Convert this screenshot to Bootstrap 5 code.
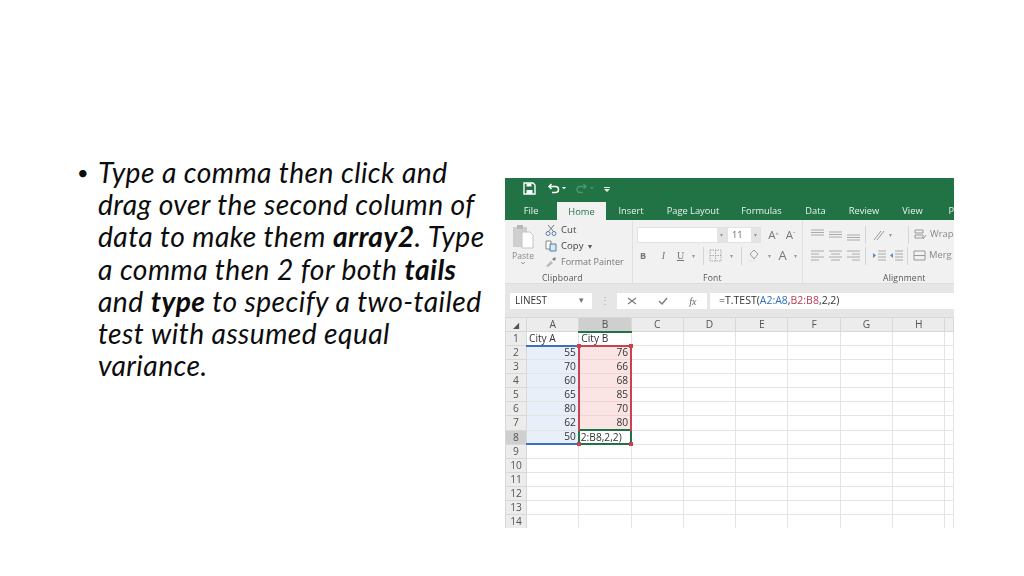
<!doctype html>
<html lang="en"><head><meta charset="utf-8"><title>T.TEST</title>
<link href="https://cdn.jsdelivr.net/npm/bootstrap@5.3.0/dist/css/bootstrap.min.css" rel="stylesheet">
<style>
html,body{height:576px;overflow:hidden;background:#fff}
.slide{width:1024px;height:576px;padding:156px 0 0 76px}
.copy{width:429px;font-family:Lato,"Liberation Sans",sans-serif;font-size:28.2px;letter-spacing:.44px;line-height:32.2px;font-style:italic;color:#0c0c0c;white-space:nowrap}
.copy b{font-weight:700}
.dot{width:22px;font-style:normal;font-size:20px;padding-left:1px}
.xl{width:449px;height:350px;margin-top:22px;overflow:hidden;flex:none;font-family:"Open Sans","Liberation Sans",sans-serif;filter:blur(.35px);background:#f1f1f1;color:#444}
.green{height:42px;background:#217346;color:#fff}
.qat{height:21px;margin-bottom:3px;padding:0 0 0 18px;gap:8px}
.qat .sv{margin-right:3px}
.tabs{height:18px;font-size:9.3px;line-height:18px;color:#e9f3ed;white-space:nowrap}
.tabs>span{text-align:center;flex:none}
.tabs .on{background:#f1f1f1;color:#217346;line-height:19px}
.ribbon{height:64px;font-size:9px;background:#f1f1f1;border-bottom:1px solid #ddd}
.grp{flex:none;height:63px;position:relative;border-right:1px solid #e0e0e0;padding-top:4px}
.lbl{position:absolute;bottom:-1px;font-size:8.6px;color:#555;letter-spacing:.2px;line-height:12px}
.g1{width:128px;padding-top:1px}.g2{width:170px}.g3{width:151px}
.paste{width:40px;padding:2px 7px 0 3px;color:#888;font-size:8.6px;line-height:10px;text-align:center;flex:none}
.paste svg{margin-bottom:2px;display:block;margin-inline:auto}
.clip{line-height:16px;font-size:9.6px;padding-top:1px;white-space:nowrap}
.clip .fp{font-size:9px;color:#777}
.clip svg{width:12px;height:12px;margin-right:4px;vertical-align:-3px}
.inp{height:16px;background:#fff;border:1px solid #e2e2e2;font-size:9.2px;line-height:14px;color:#666}
.ar{width:9px;background:#e4e4e4;height:14px;color:#999;font-size:6px;text-align:center;line-height:14px;flex:none}
.ar0{background:transparent}
.rw{height:21px}
.sym{color:#777;font-size:10px;width:17px;text-align:center;font-family:"Liberation Serif",serif;flex:none}
.sa{font-size:11.5px;font-family:"Open Sans",sans-serif}
.sa sup{font-size:6px}
.sb{width:12px;font-weight:700;font-family:"Open Sans",sans-serif;font-size:9px}
.si{margin-left:6px}
.sc{font-size:13px;font-family:"Open Sans",sans-serif}
.aln{width:13px;height:13px;margin-right:5px;flex:none}
.nom{margin-right:0}
.vs{width:1px;height:18px;background:#d5d5d5;margin:0 5px;flex:none}
.vs7{margin:0 7px 0 0}
.vsw{margin-left:13px}
.wt{margin-right:3px}
.wl{color:#888;font-size:9.4px}
.fbar{height:33px;padding:9px 0 0 5px;background:#e6e6e6;font-size:10px;color:#333}
.fbar .bx{height:16px;background:#fff;line-height:15px;flex:none}
.nm{width:82px;padding-left:5px}
.dots{width:25px;text-align:center;color:#aaa;line-height:15px}
.ck{width:90px;color:#666}
.fx{margin-left:3px;flex:1 1 0!important;padding-left:9px;white-space:nowrap;font-size:10.5px}
.blu{color:#2f6fc0}.red{color:#c23b54}
.sheet{border-collapse:collapse;table-layout:fixed;width:449px;background:#fff;font-size:10.2px;line-height:11px;color:#333}
.sheet col.h{width:21px}.sheet col.c{width:52.3px}
.sheet td{height:14.07px;padding:0 2px;border:1px solid #e4e4e4;font-weight:400;overflow:hidden;white-space:nowrap}
.sheet .rh,.sheet .ch{background:#ececec;color:#555;text-align:center;border-color:#d8d8d8}
.sheet .sel{background:#cfcfcf}
.sheet .a{background:#e8eff9;text-align:right}
.sheet .b{background:#fbe5e4;text-align:right;padding-right:2px;border-left:2px solid #c8434f;border-right:2px solid #c8434f;border-bottom-color:#f0d5d5}
.sheet .bt{border-top:2px solid #3c72bd}
.sheet .bbl{border-bottom:2px solid #3c72bd}
.sheet .bl{border-left:1px solid #9db8dd}
.sheet .tr{border-top:2px solid #c8434f}
.sheet .act{border:2px solid #217346;background:#fff;text-align:left;padding:0 1px;overflow:visible;position:relative}
.sheet .tt{overflow:visible;position:relative}
.sheet .gb{border-bottom:2px solid #217346}
.knob{position:absolute;width:4px;height:4px;background:#c8434f}
.k1{left:-3px;top:-3px}.k2{right:-3px;top:-3px}.k3{left:-3px;bottom:-3px}.k4{right:-3px;bottom:-3px}
.tl{font-size:10px;font-family:"Liberation Serif",serif}
.tri{font-size:8px;color:#bbb}
</style></head>
<body>
<main class="slide d-flex">
  <ul class="copy list-unstyled m-0 d-flex">
    <li class="d-flex"><span class="dot">•</span><span>Type a comma then click and<br>drag over the second column of<br>data to make them <b>array2</b>. Type<br>a comma then 2 for both <b>tails</b><br>and <b>type</b> to specify a two-tailed<br>test with assumed equal<br>variance.</span></li>
  </ul>
  <section class="xl">
    <div class="green">
      <div class="qat d-flex align-items-center">
        <svg class="sv" width="13" height="13" viewBox="0 0 13 13"><path d="M1 1h9l2 2v9H1z" fill="none" stroke="#fff" stroke-width="1.4"/><path d="M3.5 1.5h5v3h-5zM3.5 8h6v4h-6z" fill="#fff"/></svg>
        <svg width="20" height="11" viewBox="0 0 20 11"><path d="M2 3.5h6.5a3 3 0 0 1 0 6H5M4.5 1 2 3.5 4.5 6" fill="none" stroke="#fff" stroke-width="1.5"/><path d="M15 4h4l-2 2.2z" fill="#fff"/></svg>
        <svg width="20" height="11" viewBox="0 0 20 11"><path d="M11 3.5H5a3 3 0 0 0 0 6h3M8.5 1 11 3.5 8.5 6" fill="none" stroke="#4f9570" stroke-width="1.3"/><path d="M15 4h4l-2 2.2z" fill="#4f9570"/></svg>
        <svg width="8" height="8" viewBox="0 0 8 8"><path d="M1 2h6v1H1zM1 4h6L4 7z" fill="#dcebe3"/></svg>
      </div>
      <div class="tabs d-flex">
        <span style="width:52px">File</span><span class="on" style="width:49px">Home</span><span style="width:50px">Insert</span><span style="width:74px">Page Layout</span><span style="width:63px">Formulas</span><span style="width:45px">Data</span><span style="width:52px">Review</span><span style="width:45px">View</span><span style="width:19px;text-align:right">P</span>
      </div>
    </div>
    <div class="ribbon d-flex">
      <div class="grp g1 d-flex">
        <div class="paste">
          <svg width="24" height="26" viewBox="0 0 24 26"><path d="M2 4h14v20H2z" fill="#cfcfcf"/><path d="M6 2h6v4H6z" fill="#b8b8b8"/><path d="M11 9h8l3 3v13H11z" fill="#fff" stroke="#c4c4c4"/></svg>
          <div>Paste</div>
          <svg width="6" height="4" viewBox="0 0 6 4"><path d="M1 1l2 2 2-2" fill="none" stroke="#999"/></svg>
        </div>
        <div class="clip">
          <div><svg viewBox="0 0 12 12"><path d="M3 1l6 7M9 1L3 8" stroke="#777" fill="none"/><circle cx="3" cy="9.5" r="2" fill="none" stroke="#5b7fa8"/><circle cx="9" cy="9.5" r="2" fill="none" stroke="#5b7fa8"/></svg>Cut</div>
          <div><svg viewBox="0 0 12 12"><path d="M1 1h5v8H1z" fill="#fff" stroke="#888"/><path d="M5 4h6v7H5z" fill="#dbe7f3" stroke="#4d7cab"/></svg>Copy &nbsp;<small class="text-muted">▾</small></div>
          <div class="fp"><svg viewBox="0 0 12 12"><path d="M1 10l5-5 2 2-5 4z" fill="#b9b9b9"/><path d="M7 3l3-2 1 2-2 2z" fill="#888"/></svg>Format Painter</div>
        </div>
        <span class="lbl" style="left:37px">Clipboard</span>
      </div>
      <div class="grp g2 ps-1">
        <div class="rw d-flex align-items-center">
          <div class="inp d-flex justify-content-end" style="width:90px"><span class="ar">▾</span></div>
          <div class="inp d-flex justify-content-between ps-1" style="width:34px">11<span class="ar">▾</span></div>
          <span class="sym sa ms-1">A<sup>^</sup></span><span class="sym sa">A<sup>ˇ</sup></span>
        </div>
        <div class="rw d-flex align-items-center">
          <span class="sym sb">B</span><span class="sym si fst-italic">I</span><span class="sym text-decoration-underline">U</span><span class="ar ar0">▾</span>
          <span class="vs"></span>
          <svg class="aln" viewBox="0 0 13 13"><path d="M1 1h11v11H1zM6.5 1v11M1 6.5h11" fill="none" stroke="#a8a8a8" stroke-dasharray="1.5 1"/></svg>
          <span class="ar ar0">▾</span><span class="vs"></span>
          <svg class="aln" viewBox="0 0 13 13"><path d="M3 5l4-4 4 4-4 5z" fill="none" stroke="#999"/><path d="M1 11h8v1.5H1z" fill="#e8e8e8"/></svg>
          <span class="ar ar0">▾</span>
          <span class="sym sc">A</span><span class="ar ar0">▾</span>
        </div>
        <span class="lbl" style="left:70px">Font</span>
      </div>
      <div class="grp g3 ps-2 border-0">
        <div class="rw d-flex align-items-center">
          <svg class="aln" viewBox="0 0 13 13"><path d="M0 2h13M0 4.500h13M0 7h13" stroke="#aaa" fill="none"/></svg>
          <svg class="aln" viewBox="0 0 13 13"><path d="M0 4h13M0 6.500h13M0 9h13" stroke="#aaa" fill="none"/></svg>
          <svg class="aln" viewBox="0 0 13 13"><path d="M0 7h13M0 9.500h13M0 12h13" stroke="#aaa" fill="none"/></svg>
          <span class="vs vs7"></span>
          <svg class="aln nom" viewBox="0 0 13 13"><path d="M1 12 8 3M4 12l7-9" stroke="#999" fill="none"/></svg>
          <span class="ar ar0">▾</span>
          <span class="vs vsw"></span>
          <svg class="aln wt" viewBox="0 0 13 13"><path d="M1 2h8v3H1zM1 7h8v3H1z" fill="none" stroke="#999"/><path d="M9 11l3-4" stroke="#999"/></svg><span class="wl">Wrap</span>
        </div>
        <div class="rw d-flex align-items-center">
          <svg class="aln" viewBox="0 0 13 13"><path d="M0 2h13M0 5h8M0 8h13M0 11h8" stroke="#aaa" fill="none"/></svg>
          <svg class="aln" viewBox="0 0 13 13"><path d="M0 2h13M2 5h9M0 8h13M2 11h9" stroke="#aaa" fill="none"/></svg>
          <svg class="aln" viewBox="0 0 13 13"><path d="M0 2h13M5 5h8M0 8h13M5 11h8" stroke="#aaa" fill="none"/></svg>
          <span class="vs vs7"></span>
          <svg class="aln nom" viewBox="0 0 13 13"><path d="M5 2h8M5 5h8M5 8h8M5 11h8" stroke="#aaa" fill="none"/><path d="M0 4l3 2.5L0 9z" fill="#5b8cc0"/></svg>
          <svg class="aln nom ms-1" viewBox="0 0 13 13"><path d="M5 2h8M5 5h8M5 8h8M5 11h8" stroke="#aaa" fill="none"/><path d="M3 4 0 6.5 3 9z" fill="#5b8cc0"/></svg>
          <span class="vs ms-1"></span>
          <svg class="aln wt" viewBox="0 0 13 13"><path d="M1 2h11v9H1zM1 6.5h11" fill="none" stroke="#999"/></svg><span class="wl">Merg</span>
        </div>
        <span class="lbl" style="left:80px">Alignment</span>
      </div>
    </div>
    <div class="fbar d-flex">
      <div class="bx nm d-flex justify-content-between pe-2">LINEST<small class="text-secondary">▾</small></div>
      <div class="dots">⋮</div>
      <div class="bx ck d-flex justify-content-around align-items-center">
        <svg width="10" height="10" viewBox="0 0 10 10"><path d="M1 2l8 6M9 2 1 8" stroke="#777" stroke-width="1.1"/></svg>
        <svg width="10" height="10" viewBox="0 0 10 10"><path d="M1 5l3 3 5-6" stroke="#777" fill="none" stroke-width="1.3"/></svg>
        <i class="tl">fx</i>
      </div>
      <div class="bx fx">=T.TEST(<span class="blu">A2:A8</span>,<span class="red">B2:B8</span>,2,2)</div>
    </div>
    <table class="sheet">
      <colgroup><col class="h"><col class="c"><col class="c"><col class="c"><col class="c"><col class="c"><col class="c"><col class="c"><col class="c"><col></colgroup>
      <tbody>
        <tr><td class="rh tri">◢</td><td class="ch">A</td><td class="ch sel gb">B</td><td class="ch">C</td><td class="ch">D</td><td class="ch">E</td><td class="ch">F</td><td class="ch">G</td><td class="ch">H</td><td class="ch"></td></tr>
        <tr><td class="rh">1</td><td>City A</td><td>City B</td><td></td><td></td><td></td><td></td><td></td><td></td><td></td></tr>
        <tr><td class="rh">2</td><td class="a bl bt">55</td><td class="b tr tt">76<span class="knob k1"></span><span class="knob k2"></span></td><td></td><td></td><td></td><td></td><td></td><td></td><td></td></tr>
        <tr><td class="rh">3</td><td class="a bl">70</td><td class="b">66</td><td></td><td></td><td></td><td></td><td></td><td></td><td></td></tr>
        <tr><td class="rh">4</td><td class="a bl">60</td><td class="b">68</td><td></td><td></td><td></td><td></td><td></td><td></td><td></td></tr>
        <tr><td class="rh">5</td><td class="a bl">65</td><td class="b">85</td><td></td><td></td><td></td><td></td><td></td><td></td><td></td></tr>
        <tr><td class="rh">6</td><td class="a bl">80</td><td class="b">70</td><td></td><td></td><td></td><td></td><td></td><td></td><td></td></tr>
        <tr><td class="rh">7</td><td class="a bl">62</td><td class="b">80</td><td></td><td></td><td></td><td></td><td></td><td></td><td></td></tr>
        <tr><td class="rh sel">8</td><td class="a bl bbl">50</td><td class="act">2:B8,2,2)<span class="knob k3"></span><span class="knob k4"></span></td><td></td><td></td><td></td><td></td><td></td><td></td><td></td></tr>
        <tr><td class="rh">9</td><td></td><td></td><td></td><td></td><td></td><td></td><td></td><td></td><td></td></tr>
        <tr><td class="rh">10</td><td></td><td></td><td></td><td></td><td></td><td></td><td></td><td></td><td></td></tr>
        <tr><td class="rh">11</td><td></td><td></td><td></td><td></td><td></td><td></td><td></td><td></td><td></td></tr>
        <tr><td class="rh">12</td><td></td><td></td><td></td><td></td><td></td><td></td><td></td><td></td><td></td></tr>
        <tr><td class="rh">13</td><td></td><td></td><td></td><td></td><td></td><td></td><td></td><td></td><td></td></tr>
        <tr><td class="rh">14</td><td></td><td></td><td></td><td></td><td></td><td></td><td></td><td></td><td></td></tr>
      </tbody>
    </table>
  </section>
</main>
<script src="https://cdn.jsdelivr.net/npm/bootstrap@5.3.0/dist/js/bootstrap.bundle.min.js"></script>
</body></html>
